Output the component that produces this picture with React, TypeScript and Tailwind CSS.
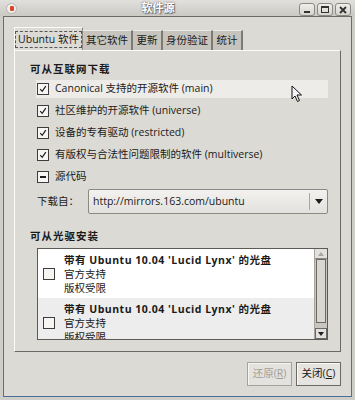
import React from 'react';

const rows = [
  { text: 'Canonical 支持的开源软件 (main)', state: 'on', hover: true },
  { text: '社区维护的开源软件 (universe)', state: 'on' },
  { text: '设备的专有驱动 (restricted)', state: 'on' },
  { text: '有版权与合法性问题限制的软件 (multiverse)', state: 'on' },
  { text: '源代码', state: 'mixed' },
];

const tabs = [
  { t: '其它软件', w: 'w-[50px]' },
  { t: '更新', w: 'w-[30px]' },
  { t: '身份验证', w: 'w-[50px]' },
  { t: '统计', w: 'w-[30px]' },
];

function Check({ state }: { state: string }) {
  return (
    <span className="w-[12px] h-[12px] border border-[#3f3d3a] bg-[#f6f5f3] flex items-center justify-center shrink-0">
      {state === 'on' && (
        <svg width="8" height="8" viewBox="0 0 8 8">
          <path d="M1.2 4.2 L3.2 6.4 L6.8 1.2" stroke="#1e1e1e" strokeWidth="1.2" fill="none" />
        </svg>
      )}
      {state === 'mixed' && <span className="w-[6px] h-[2px] bg-[#1e1e1e]" />}
    </span>
  );
}

function Disc({ bg }: { bg: string }) {
  return (
    <div className={`h-[49px] shrink-0 flex items-center pl-[5px] ${bg}`}>
      <Check state="off" />
      <div className="ml-[9px] flex flex-col leading-[14px] whitespace-nowrap">
        <span className="font-bold tracking-[0.5px]">带有 Ubuntu 10.04 'Lucid Lynx' 的光盘</span>
        <span>官方支持</span>
        <span>版权受限</span>
      </div>
    </div>
  );
}

export default function App() {
  return (
    <div className="w-[355px] h-[400px] bg-[#cfcdc8] flex flex-col relative text-[10.5px] text-[#1a1a1a] font-['Open_Sans','Noto_Sans_CJK_SC',sans-serif]">
      {/* title bar */}
      <div className="h-[16px] flex items-center relative bg-gradient-to-b from-[#e2e0dc] to-[#cbc9c4]">
        <div className="ml-[6px] w-[11px] h-[11px] rounded-full bg-[#f1efec] border border-[#b9b6b0] flex items-center justify-center">
          <span className="w-[4px] h-[5px] bg-[#d9482b] rounded-[1px]" />
        </div>
        <div className="flex-1 text-center font-bold text-white text-[11px] [text-shadow:0_0_2px_#555,1px_1px_1px_#666]">软件源</div>
        <div className="flex gap-[2px] mr-[4px] mt-[3px]">
          {['min', 'max', 'close'].map((k) => (
            <div key={k} className="w-[16px] h-[13px] rounded-[3px] border border-[#8c8983] bg-gradient-to-b from-[#f0efec] to-[#d6d4cf] flex items-center justify-center">
              {k === 'min' && <span className="w-[6px] h-[2px] bg-[#333] mt-[5px]" />}
              {k === 'max' && <span className="w-[8px] h-[7px] border border-[#333] border-t-2" />}
              {k === 'close' && (
                <svg width="8" height="8" viewBox="0 0 8 8">
                  <path d="M1 1 L7 7 M7 1 L1 7" stroke="#333" strokeWidth="1.8" />
                </svg>
              )}
            </div>
          ))}
        </div>
      </div>

      {/* window body */}
      <div className="flex-1 mx-[3px] mb-[3px] border border-[#6f6c66] border-b-[#4d6f96] bg-[#dcdad5] flex flex-col pl-[10px] pr-[10px] pt-[10px]">
        {/* tabs */}
        <div className="flex items-end h-[23px] whitespace-nowrap">
          <div className="h-[23px] w-[69px] bg-[#dcdad5] border border-b-0 border-t-[#fbfbfa] border-l-[#fbfbfa] border-r-[#8a8780] flex items-center justify-center relative z-10">
            <span className="px-[2px] border border-dashed border-[#555] leading-[15px]">Ubuntu 软件</span>
          </div>
          {tabs.map((t) => (
            <div key={t.t} className={`h-[20px] ${t.w} bg-[#c7c4bd] border-t border-t-[#ecebe8] border-r-2 border-r-[#7d7a73] flex items-center justify-center`}>
              {t.t}
            </div>
          ))}
        </div>

        {/* notebook panel */}
        <div className="h-[302px] border border-t-[#fbfbfa] border-l-[#fbfbfa] border-r-[#6c6963] border-b-[#6c6963] flex flex-col pl-[15px] pr-[12px] relative">
          <div className="mt-[10px] h-[16px] leading-[16px] font-bold tracking-[1px]">可从互联网下载</div>
          <div className="mt-[1px] flex flex-col pl-[6px]">
            {rows.map((r) => (
              <div key={r.text} className="h-[22px] flex items-center">
                <div className={`flex-1 h-[18px] flex items-center pl-[1px] ${r.hover ? 'bg-[#eeece9]' : ''}`}>
                  <Check state={r.state} />
                  <span className="ml-[6px]">{r.text}</span>
                </div>
              </div>
            ))}
          </div>
          <div className="mt-[1px] h-[25px] flex items-center pl-[7px]">
            <span className="w-[51px]">下载自：</span>
            <div className="flex-1 h-[25px] flex items-center border border-[#8d8a84] bg-gradient-to-b from-[#f3f2f0] to-[#e3e1dd] rounded-[2px]">
              <span className="flex-1 pl-[4px]">http://mirrors.163.com/ubuntu</span>
              <span className="w-px h-[17px] bg-[#a9a6a0]" />
              <span className="w-[17px] flex items-center justify-center">
                <svg width="8" height="5" viewBox="0 0 8 5">
                  <path d="M0 0 H8 L4 5 Z" fill="#1e1e1e" />
                </svg>
              </span>
            </div>
          </div>
          <div className="mt-[14px] h-[16px] leading-[16px] font-bold tracking-[1px]">可从光驱安装</div>
          <div className="mt-[4px] ml-[7px] h-[92px] flex border border-[#5c5a55] bg-white">
            <div className="flex-1 flex flex-col overflow-hidden">
              <Disc bg="bg-white" />
              <Disc bg="bg-[#ededed]" />
            </div>
            <div className="w-[13px] bg-[#c9c6c0] border-l border-[#a8a59f] flex flex-col">
              <div className="h-[10px] bg-[#e3e1dd] border-b border-[#8c8983] flex items-center justify-center">
                <svg width="6" height="4" viewBox="0 0 6 4"><path d="M0 4 H6 L3 0 Z" fill="#a9a6a0" /></svg>
              </div>
              <div className="h-[64px] mx-[1px] bg-[#d9d7d2] border border-[#6c6963]" />
              <div className="flex-1" />
              <div className="h-[11px] bg-[#e3e1dd] border border-[#6c6963] flex items-center justify-center">
                <svg width="6" height="4" viewBox="0 0 6 4"><path d="M0 0 H6 L3 4 Z" fill="#1e1e1e" /></svg>
              </div>
            </div>
          </div>

          {/* mouse cursor */}
          <svg className="absolute left-[276px] top-[34px]" width="12" height="18" viewBox="0 0 12 18">
            <path d="M1 1 L1 14 L4 11 L6.5 16.5 L8.5 15.5 L6 10 L10.5 10 Z" fill="#f4f4f4" stroke="#111" strokeWidth="1" />
          </svg>
        </div>

        {/* buttons */}
        <div className="mt-[10px] flex justify-end gap-[4px]">
          <div className="w-[45px] h-[24px] border border-[#a6a39d] bg-[#e4e2de] flex items-center justify-center text-[#a19e97] shadow-[inset_1px_1px_0_#f7f6f4]">
            还原(<span className="underline">R</span>)
          </div>
          <div className="w-[45px] h-[24px] border border-[#6c6963] bg-[#e6e4e0] flex items-center justify-center shadow-[inset_1px_1px_0_#fbfbfa]">
            关闭(<span className="underline">C</span>)
          </div>
        </div>
      </div>
    </div>
  );
}
